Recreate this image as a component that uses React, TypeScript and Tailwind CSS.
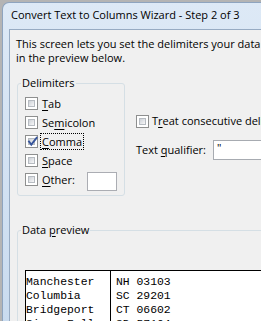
import React from 'react';

const Check = ({ checked = false }: { checked?: boolean }) => (
  <span className="relative flex w-[13px] h-[13px] shrink-0 border border-[#8e8f8f] bg-white p-[2px]">
    <span className="flex-1 border border-[#b6bbc1] bg-gradient-to-br from-[#cdd1d7] to-[#f7f7f8]" />
    {checked && (
      <svg className="absolute left-[1px] top-[0px]" width="11" height="11" viewBox="0 0 11 11">
        <path d="M2 5.5 L4.3 8.6 L9.6 1.8" fill="none" stroke="#37559b" strokeWidth="1.9" strokeLinecap="square" />
      </svg>
    )}
  </span>
);

const U = ({ children }: { children: React.ReactNode }) => (
  <span className="underline underline-offset-[2px] decoration-[1px]">{children}</span>
);

const delimiters: { key: string; label: React.ReactNode; checked?: boolean; focused?: boolean }[] = [
  { key: 'tab', label: <><U>T</U>ab</> },
  { key: 'semi', label: <>Se<U>m</U>icolon</> },
  { key: 'comma', label: <><U>C</U>omma</>, checked: true, focused: true },
  { key: 'space', label: <><U>S</U>pace</> },
];

const rows = [
  ['Manchester', 'NH 03103'],
  ['Columbia', 'SC 29201'],
  ['Bridgeport', 'CT 06602'],
  ['Sioux Falls', 'SD 57104'],
  ['Bangor', 'ME 04401'],
];

export default function App() {
  return (
    <div className="w-[261px] h-[321px] overflow-hidden bg-[#b4b4b4] pt-[2px] pl-[2px] font-['Open_Sans',sans-serif] text-[11px] text-black">
      <div className="w-[420px] h-[420px] rounded-tl-[7px] border-l border-t border-[#8ea4bf] bg-gradient-to-b from-[#dde9f6] to-[#c3d7ed] pl-[6px] flex flex-col">
        {/* title bar */}
        <div className="h-[26px] shrink-0 flex items-center pl-[2px] pb-[1px] whitespace-nowrap">
          Convert Text to Columns Wizard - Step 2 of 3
        </div>

        {/* client area */}
        <div className="flex-1 bg-[#f0f0f0] border-l border-t border-[#97abc3]">
          <p className="pl-[6px] pt-[7px] leading-[14px] whitespace-nowrap">
            This screen lets you set the delimiters your data contains. You can see how your text is affected
            <br />
            in the preview below.
          </p>

          <div className="flex items-start ml-[7px] mt-[11px]">
            <fieldset className="w-[108px] border border-[#d5dfe5] rounded-[3px] px-[7px] pb-[6px]">
              <legend className="ml-[-4px] px-[1px] leading-[14px]">Delimiters</legend>
              <div className="mt-[4px] flex flex-col">
                {delimiters.map(d => (
                  <div key={d.key} className="h-[19px] flex items-center">
                    <Check checked={d.checked} />
                    <span
                      className={
                        d.focused
                          ? 'ml-[2px] px-[1px] border border-dotted border-black leading-[15px]'
                          : 'ml-[4px] leading-[14px]'
                      }
                    >
                      {d.label}
                    </span>
                  </div>
                ))}
                <div className="h-[19px] flex items-center">
                  <Check />
                  <span className="ml-[4px] w-[45px] leading-[14px]">
                    <U>O</U>ther:
                  </span>
                  <span className="self-start mt-[2px] w-[30px] h-[19px] shrink-0 border border-[#abadb3] bg-white" />
                </div>
              </div>
            </fieldset>

            <div className="ml-[11px] pt-[36px] flex flex-col">
              <div className="h-[19px] flex items-center whitespace-nowrap">
                <Check />
                <span className="ml-[3px]">
                  T<U>r</U>eat consecutive delimiters as one
                </span>
              </div>
              <div className="mt-[9px] h-[20px] flex items-center whitespace-nowrap">
                <span className="w-[77px] shrink-0">
                  Text <U>q</U>ualifier:
                </span>
                <span className="h-[20px] w-[120px] shrink-0 border border-[#a7abb1] bg-white pl-[3px] leading-[14px]">
                  "
                </span>
              </div>
            </div>
          </div>

          <fieldset className="ml-[7px] mt-[27px] w-[320px] h-[200px] border border-[#d5dfe5] rounded-[3px] px-[7px]">
            <legend className="ml-[-4px] px-[1px] leading-[14px]">
              Data <U>p</U>review
            </legend>
            <div className="mt-[33px] w-[320px] h-[160px] border border-black bg-white flex font-['Liberation_Mono',monospace] text-[11.4px] leading-[14px]">
              <div className="w-[85px] border-r border-black pt-[4px] whitespace-nowrap">
                {rows.map(r => (
                  <div key={r[0]}>{r[0]}</div>
                ))}
              </div>
              <div className="pl-[5px] pt-[4px] whitespace-nowrap">
                {rows.map(r => (
                  <div key={r[0]}>{r[1]}</div>
                ))}
              </div>
            </div>
          </fieldset>
        </div>
      </div>
    </div>
  );
}
